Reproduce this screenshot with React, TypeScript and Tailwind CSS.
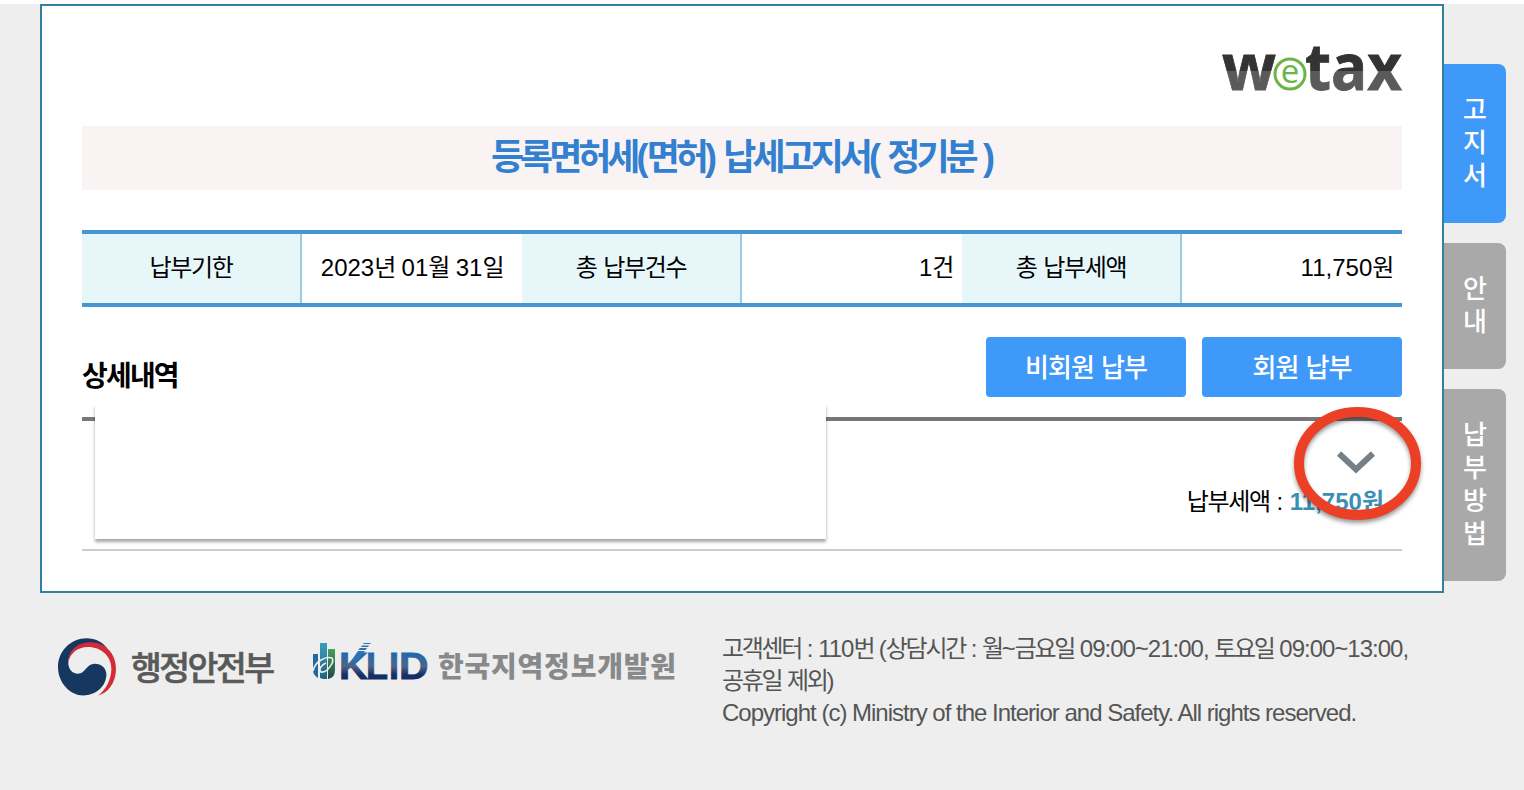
import React from "react";
import { clsx } from "clsx";

const summary = [
  { label: "납부기한", value: "2023년 01월 31일", align: "justify-center" },
  { label: "총 납부건수", value: "1건", align: "justify-end pr-[9px]" },
  { label: "총 납부세액", value: "11,750원", align: "justify-end pr-[9px]" },
];

const tabs = [
  { label: "고지서", active: true },
  { label: "안내", active: false },
  { label: "납부방법", active: false },
];

// Hangul runs are set tighter than the digits and latin letters around them
const Ko: React.FC<{ children: string; tight?: string }> = ({ children, tight = "tracking-[-0.055em]" }) => (
  <>
    {children.split(/([가-힣]+)/).map((part, i) =>
      i % 2 ? <span key={i} className={tight}>{part}</span> : part
    )}
  </>
);

export default function App() {
  return (
    <div className="h-[790px] w-[1524px] overflow-hidden bg-white pt-1 font-['Liberation_Sans','Noto_Sans_CJK_KR',sans-serif] text-2xl text-black">
      <div className="h-full bg-[#eeeeee]">
        <div className="flex items-start pl-10">
          <main className="relative h-[589px] w-[1404px] border-2 border-[#367f9f] bg-white px-10 pt-10">
            <header className="flex h-[44px] justify-end">
              <WetaxLogo />
            </header>
            <h1 className="mt-9 flex h-16 items-center justify-center whitespace-pre bg-[#f9f3f3] text-4xl font-bold tracking-[-1.8px] text-[#337fd0]">
              <span><Ko tight="tracking-[-4px]">등록면허세(면허) 납세고지서( 정기분 )</Ko></span>
            </h1>

            <div className="mt-10 grid h-[77px] grid-cols-6 border-y-4 border-[#4596d1]">
              {summary.map(item => (
                <React.Fragment key={item.label}>
                  <div className="flex items-center justify-center border-r-2 border-[#9ccbe6] bg-[#e6f6f9] pb-0.5">
                    <span><Ko>{item.label}</Ko></span>
                  </div>
                  <div className={clsx("flex items-center whitespace-nowrap pb-0.5", item.align)}>
                    <span><Ko>{item.value}</Ko></span>
                  </div>
                </React.Fragment>
              ))}
            </div>

            <div className="mt-[30px] flex h-20 justify-between">
              <h2 className="pt-[19px] text-[28px] font-bold leading-[42px]"><Ko tight="tracking-[-0.065em]">상세내역</Ko></h2>
              <div className="flex gap-4 text-[26px] font-medium text-white">
                <button className="h-[60px] w-[200px] rounded bg-[#3f99f8] pt-0.5"><Ko tight="tracking-[-1px]">비회원 납부</Ko></button>
                <button className="h-[60px] w-[200px] rounded bg-[#3f99f8] pt-0.5"><Ko tight="tracking-[-1px]">회원 납부</Ko></button>
              </div>
            </div>

            <div className="flex h-[134px] flex-col items-end border-t-4 border-b-2 border-t-[#777777] border-b-[#cccccc] pr-5 pt-[30px]">
              <svg width="38" height="24" viewBox="0 0 38 24" className="mr-[7px]">
                <path d="M2 2.500 L19 18.500 L36 2.500" fill="none" stroke="#748085" strokeWidth="6" />
              </svg>
              <p className="mt-[9px] whitespace-nowrap leading-9">
                <Ko>납부세액 : </Ko>
                <b className="text-[#3b8fb5]"><Ko tight="tracking-[-2px]">11,750원</Ko></b>
              </p>
            </div>

            {/* blank cover over the private details */}
            <div className="absolute left-[53px] top-[398px] h-[135px] w-[731px] bg-white shadow-[0_3px_3px_rgba(0,0,0,0.35)]" />
            {/* marker round the arrow */}
            <svg className="absolute left-[1242px] top-[395px] overflow-visible" width="147" height="133" viewBox="0 0 147 133">
              <ellipse cx="73.5" cy="62.5" rx="58.5" ry="51.5" fill="none" stroke="#ec4026" strokeWidth="10" className="drop-shadow-[0_3px_2px_rgba(0,0,0,0.4)]" />
            </svg>
          </main>

          <nav className="mt-[60px] flex flex-col gap-5">
            {tabs.map(tab => (
              <button
                key={tab.label}
                className={clsx(
                  "flex w-[62px] flex-col items-center rounded-r-lg py-[30px] text-[26px] font-medium leading-[33px] text-white",
                  tab.active ? "bg-[#3f99f8]" : "bg-[#a9a9a9]"
                )}
              >
                {tab.label.split("").map(ch => <span key={ch}>{ch}</span>)}
              </button>
            ))}
          </nav>
        </div>

        <footer className="flex items-start pl-[58px]">
          <MinistryLogo />
          <KlidLogo />
          <div className="ml-[46px] mt-10 whitespace-nowrap leading-8 tracking-[-1px] text-[#555555]">
            <p><Ko tight="tracking-[-2.3px]">고객센터 : 110번 (상담시간 : 월~금요일 09:00~21:00, 토요일 09:00~13:00,</Ko></p>
            <p><Ko tight="tracking-[-2.3px]">공휴일 제외)</Ko></p>
            <p>Copyright (c) Ministry of the Interior and Safety. All rights reserved.</p>
          </div>
        </footer>
      </div>
    </div>
  );
}

function WetaxLogo() {
  return (
    <svg width="180" height="44" viewBox="0 0 180 44" className="overflow-visible font-['Open_Sans',sans-serif]">
      <defs>
        <linearGradient id="wetax" gradientUnits="userSpaceOnUse" x1="0" y1="0" x2="0" y2="44">
          <stop offset="0.57" stopColor="#333333" />
          <stop offset="0.57" stopColor="#5a5a5a" />
        </linearGradient>
      </defs>
      <g fill="url(#wetax)" stroke="url(#wetax)" strokeWidth="0.8" fontSize="64" fontWeight="700">
        <text x="0" y="44" textLength="54" lengthAdjust="spacingAndGlyphs">w</text>
        <text x="83" y="44" textLength="97" lengthAdjust="spacingAndGlyphs">tax</text>
      </g>
      <circle cx="68" cy="28" r="15" fill="#ffffff" stroke="#6ab544" strokeWidth="3" />
      <text x="68" y="36.500" textAnchor="middle" fontSize="33" fontWeight="500" fill="#6ab544">e</text>
    </svg>
  );
}

function MinistryLogo() {
  return (
    <div className="mt-[45px] flex items-center">
      <svg width="58" height="58" viewBox="0 0 175 174">
        <path fill="#163860" d="M150 32C135 11 112 0 87 0C38 0 0 39 0 87C0 136 38 173 76 173C113 173 146 146 146 110C146 90 131 77 111 77C85 77 83 107 60 107C43 107 31 93 31 74C31 38 62 15 97 15C118 15 136 20 150 32Z" />
        <path fill="#d52b36" d="M31 75C30 38 59 12 98 12C142 12 175 45 175 92C175 136 149 166 121 173C145 155 161 124 161 92C161 54 129 27 91 27C58 27 36 46 31 75Z" />
      </svg>
      <svg width="144" height="58" viewBox="0 0 144 58" className="ml-4 overflow-visible">
        <text x="-1" y="42" fontSize="33.500" fontWeight="500" fill="#595959" stroke="#595959" strokeWidth="0.6" textLength="144" lengthAdjust="spacing">행정안전부</text>
      </svg>
    </div>
  );
}

function KlidLogo() {
  return (
    <svg width="364" height="40" viewBox="0 0 364 40" className="ml-[36px] mt-[48px] overflow-visible">
      <defs>
        <linearGradient id="klid" gradientUnits="userSpaceOnUse" x1="0" y1="10" x2="0" y2="38">
          <stop offset="0.1" stopColor="#2168ae" />
          <stop offset="0.55" stopColor="#4c6488" />
          <stop offset="0.85" stopColor="#152f66" />
        </linearGradient>
        <linearGradient id="bar" x1="0" y1="0" x2="0" y2="1">
          <stop offset="0" stopColor="#3a9dbc" />
          <stop offset="1" stopColor="#246379" />
        </linearGradient>
        <linearGradient id="leaf" x1="0" y1="0" x2="0" y2="1">
          <stop offset="0" stopColor="#48a15a" />
          <stop offset="1" stopColor="#1d4a4b" />
        </linearGradient>
      </defs>
      <path fill="#2367a3" d="M1 13H6V37C3 35 1 33 1 29Z" />
      <path fill="url(#bar)" d="M8 2H15V38H11L8 37Z" />
      <path fill="url(#leaf)" d="M16 8H23V28C23 34 21 37 16 38Z" />
      <path d="M1 30C3 20 14 15 20 17C23 21 15 32 9 31C6 29 9 24 14 22" fill="none" stroke="#eeeeee" strokeWidth="1.6" />
      <g fill="url(#klid)" stroke="url(#klid)" strokeWidth="0.8" fontSize="36" fontWeight="700" className="font-['Liberation_Sans',sans-serif]">
        <text x="27" y="38" textLength="29" lengthAdjust="spacingAndGlyphs">K</text>
        <text x="54" y="38">L</text>
        <text x="77" y="38">I</text>
        <text x="87" y="38" textLength="29.500" lengthAdjust="spacingAndGlyphs">D</text>
      </g>
      <path fill="#2e73b3" d="M52 2H59L58 3H51ZM50 4.500H57L56 6H49ZM48 7H55L53.500 9H46ZM46 10H53L44 21L39 20Z" />
      <text x="126" y="36" fontSize="28" fontWeight="900" fill="#88898b" textLength="238" lengthAdjust="spacing">한국지역정보개발원</text>
    </svg>
  );
}
